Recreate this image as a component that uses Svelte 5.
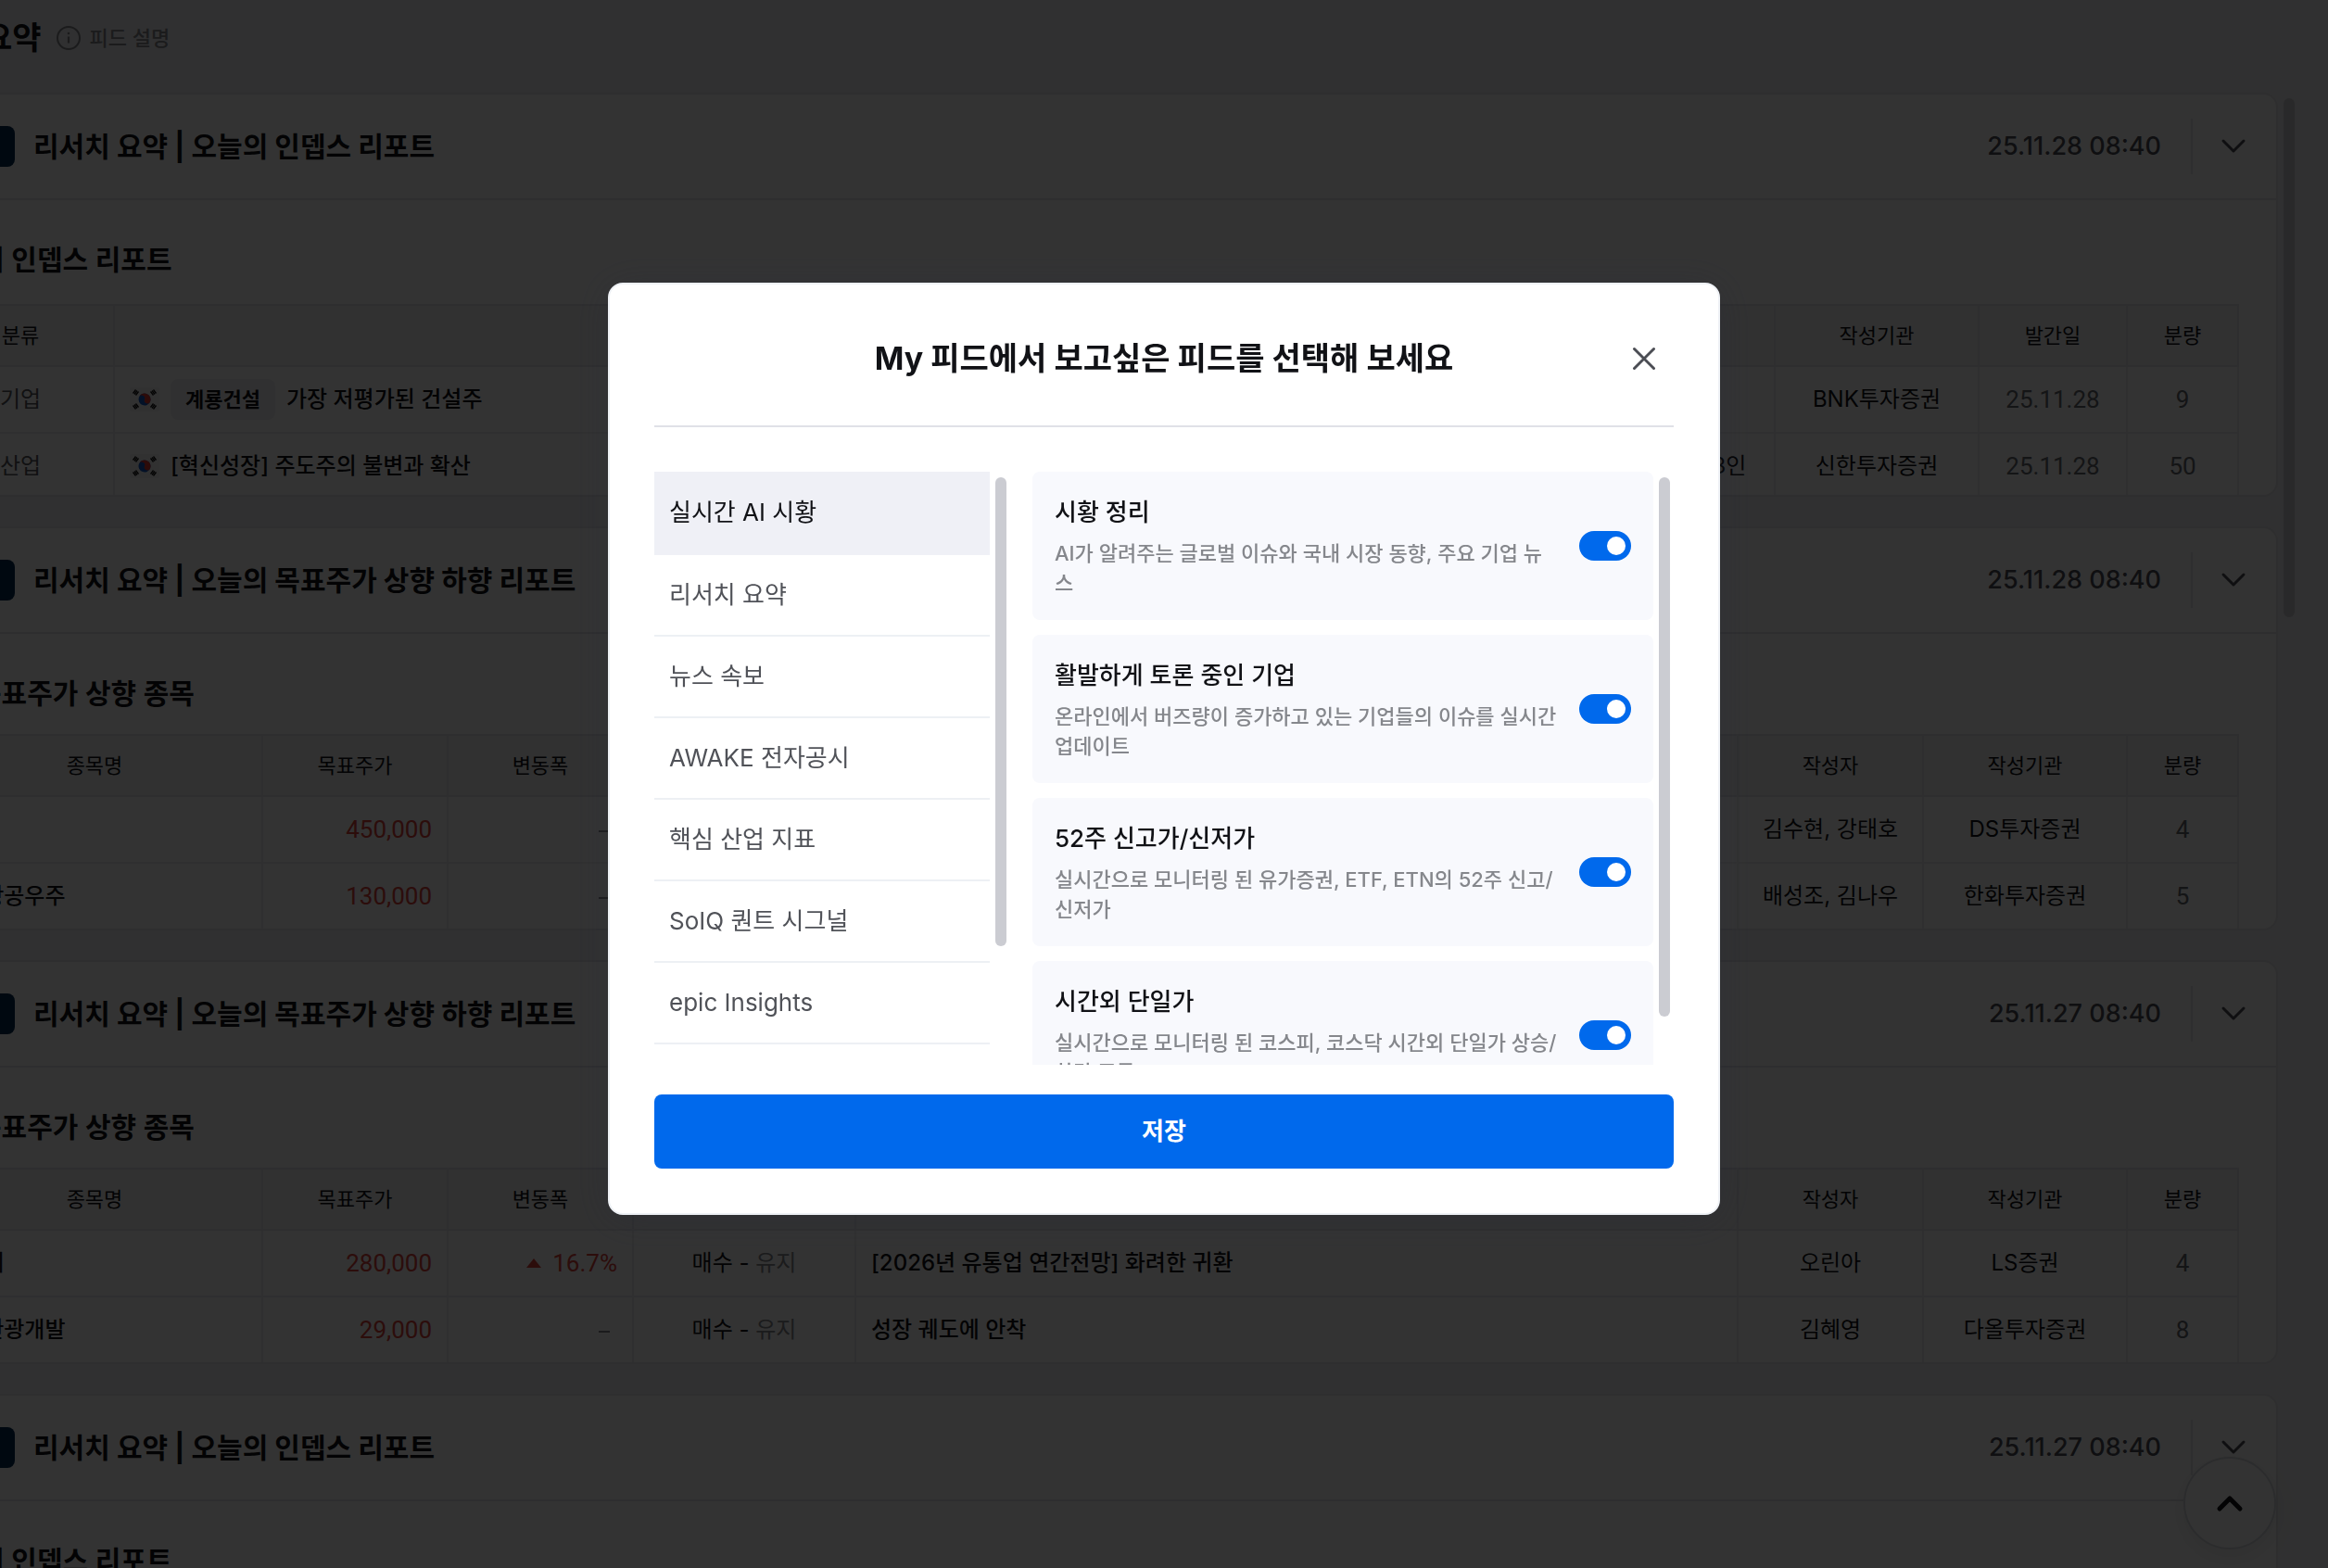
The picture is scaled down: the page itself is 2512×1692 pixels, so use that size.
<script lang="ts">
  interface Row {
    name: string;
    target: string;
    change?: string;
    opinion: string;
    title: string;
    author: string;
    firm: string;
    pages: number;
  }

  interface Feed {
    type: 'indepth' | 'target';
    title: string;
    time: string;
    rows: Row[];
  }

  const indepthRows = [
    { category: '기업', tag: '계룡건설', title: '가장 저평가된 건설주', author: '김선미', firm: 'BNK투자증권', date: '25.11.28', pages: 9 },
    { category: '산업', tag: '', title: '[혁신성장] 주도주의 불변과 확산', author: '심은주 외 3인', firm: '신한투자증권', date: '25.11.28', pages: 50 },
  ];

  const feeds: Feed[] = [
    { type: 'indepth', title: '리서치 요약 | 오늘의 인뎁스 리포트', time: '25.11.28 08:40', rows: [] },
    {
      type: 'target',
      title: '리서치 요약 | 오늘의 목표주가 상향 하향 리포트',
      time: '25.11.28 08:40',
      rows: [
        { name: '효성', target: '450,000', opinion: '매수', title: '', author: '김수현, 강태호', firm: 'DS투자증권', pages: 4 },
        { name: '한국항공우주', target: '130,000', opinion: '매수', title: '', author: '배성조, 김나우', firm: '한화투자증권', pages: 5 },
      ],
    },
    {
      type: 'target',
      title: '리서치 요약 | 오늘의 목표주가 상향 하향 리포트',
      time: '25.11.27 08:40',
      rows: [
        { name: '신세계', target: '280,000', change: '16.7%', opinion: '매수', title: '[2026년 유통업 연간전망] 화려한 귀환', author: '오린아', firm: 'LS증권', pages: 4 },
        { name: '롯데관광개발', target: '29,000', opinion: '매수', title: '성장 궤도에 안착', author: '김혜영', firm: '다올투자증권', pages: 8 },
      ],
    },
    { type: 'indepth', title: '리서치 요약 | 오늘의 인뎁스 리포트', time: '25.11.27 08:40', rows: [] },
  ];

  const categories = [
    '실시간 AI 시황',
    '리서치 요약',
    '뉴스 속보',
    'AWAKE 전자공시',
    '핵심 산업 지표',
    'SoIQ 퀀트 시그널',
    'epic Insights',
  ];

  let selected = $state(0);

  let options = $state([
    { title: '시황 정리', desc: 'AI가 알려주는 글로벌 이슈와 국내 시장 동향, 주요 기업 뉴스', on: true },
    { title: '활발하게 토론 중인 기업', desc: '온라인에서 버즈량이 증가하고 있는 기업들의 이슈를 실시간 업데이트', on: true },
    { title: '52주 신고가/신저가', desc: '실시간으로 모니터링 된 유가증권, ETF, ETN의 52주 신고/신저가', on: true },
    { title: '시간외 단일가', desc: '실시간으로 모니터링 된 코스피, 코스닥 시간외 단일가 상승/하락 종목', on: true },
  ]);
</script>

{#snippet flag()}
  <svg class="flag" viewBox="0 0 32 26" aria-hidden="true">
    <rect width="32" height="26" rx="2" fill="#f4f4f6" />
    <g transform="rotate(20 16 13)">
      <circle cx="16" cy="13" r="6.500" fill="#0f58c4" />
      <path d="M9.500 13a6.500 6.500 0 0 1 13 0a3.250 3.250 0 0 1-6.500 0a3.250 3.250 0 0 0-6.500 0z" fill="#e23a30" />
    </g>
    <g stroke="#111" stroke-width="1.300">
      <path d="M3.500 6.500l3-4M5 7.500l3-4M6.500 8.500l3-4" />
      <path d="M22.500 4.500l3 4M24 3.500l3 4M25.500 2.500l3 4" />
      <path d="M3.500 19.500l3 4M5 18.500l3 4M6.500 17.500l3 4" />
      <path d="M22.500 21.500l3-4M24 22.500l3-4M25.500 23.500l3-4" />
    </g>
  </svg>
{/snippet}

<div class="page">
  <header class="page-header">
    <h1>리서치 요약</h1>
    <button class="info">
      <svg width="28" height="28" viewBox="0 0 28 28" fill="none" stroke="currentColor" stroke-width="2" aria-hidden="true">
        <circle cx="14" cy="14" r="12" />
        <path d="M14 12.500v7" stroke-width="2.200" />
        <circle cx="14" cy="9" r="1.300" fill="currentColor" stroke="none" />
      </svg>
      피드 설명
    </button>
  </header>

  <div class="feed-area">
    <main class="feeds">
      {#each feeds as feed}
        <article class="feed">
          <div class="feed-header">
            <span class="logo"></span>
            <h2>{feed.title}</h2>
            <time>{feed.time}</time>
            <button class="toggle" aria-label="펼치기">
              <svg width="28" height="18" viewBox="0 0 28 18" fill="none" stroke="currentColor" stroke-width="3" stroke-linecap="round" stroke-linejoin="round">
                <path d="M3 3l11 11L25 3" />
              </svg>
            </button>
          </div>

          {#if feed.type === 'indepth'}
            <h3>오늘의 인뎁스 리포트</h3>
            <table class="indepth">
              <colgroup>
                <col class="w-category" /><col /><col class="w-author" /><col class="w-firm" /><col class="w-date" /><col class="w-pages" />
              </colgroup>
              <thead>
                <tr><th>분류</th><th>제목</th><th>작성자</th><th>작성기관</th><th>발간일</th><th>분량</th></tr>
              </thead>
              <tbody>
                {#each indepthRows as row}
                  <tr>
                    <td class="muted">{row.category}</td>
                    <td class="left strong">
                      <div class="report">
                        {@render flag()}
                        {#if row.tag}<span class="tag">{row.tag}</span>{/if}
                        <span>{row.title}</span>
                      </div>
                    </td>
                    <td>{row.author}</td>
                    <td>{row.firm}</td>
                    <td class="num">{row.date}</td>
                    <td class="num">{row.pages}</td>
                  </tr>
                {/each}
              </tbody>
            </table>
          {:else}
            <h3>
              <svg class="heading-icon" viewBox="0 0 44 44" fill="none" stroke="#e0403a" stroke-width="4" aria-hidden="true">
                <path d="M6 32l12-12 8 8 12-16" />
              </svg>
              목표주가 상향 종목
            </h3>
            <table>
              <colgroup>
                <col class="w-name" /><col class="w-price" /><col class="w-price" /><col class="w-opinion" /><col /><col class="w-author" /><col class="w-firm" /><col class="w-pages" />
              </colgroup>
              <thead>
                <tr><th>종목명</th><th>목표주가</th><th>변동폭</th><th>투자의견</th><th>제목</th><th>작성자</th><th>작성기관</th><th>분량</th></tr>
              </thead>
              <tbody>
                {#each feed.rows as row}
                  <tr>
                    <td class="left strong">{row.name}</td>
                    <td class="num right up">{row.target}</td>
                    <td class="num right" class:up={row.change}>
                      {#if row.change}
                        <svg class="arrow" width="16" height="10" viewBox="0 0 16 10" aria-hidden="true"><path d="M8 0l8 10H0z" fill="currentColor" /></svg>{row.change}
                      {:else}
                        <span class="dash"></span>
                      {/if}
                    </td>
                    <td>{row.opinion} - <span class="keep">유지</span></td>
                    <td class="left strong">{row.title}</td>
                    <td>{row.author}</td>
                    <td>{row.firm}</td>
                    <td class="num">{row.pages}</td>
                  </tr>
                {/each}
              </tbody>
            </table>
          {/if}
        </article>
      {/each}
    </main>
    <div class="page-thumb"></div>
  </div>
</div>

<button class="to-top" aria-label="맨 위로">
  <svg width="32" height="20" viewBox="0 0 32 20" fill="none" stroke="currentColor" stroke-width="5" stroke-linecap="round" stroke-linejoin="round">
    <path d="M5 16L16 5l11 11" />
  </svg>
</button>

<div class="overlay">
  <div class="modal" role="dialog" aria-modal="true" aria-labelledby="modal-title">
    <div class="modal-header">
      <h2 id="modal-title">My 피드에서 보고싶은 피드를 선택해 보세요</h2>
      <button class="close" aria-label="닫기">
        <svg width="28" height="28" viewBox="0 0 28 28" fill="none" stroke="currentColor" stroke-width="3" stroke-linecap="round">
          <path d="M3.500 3.500l21 21M24.500 3.500l-21 21" />
        </svg>
      </button>
    </div>

    <div class="modal-body">
      <div class="pane categories">
        <ul>
          {#each categories as category, i}
            <li>
              <button class:active={selected === i} onclick={() => (selected = i)}>{category}</button>
            </li>
          {/each}
        </ul>
        <div class="thumb short"></div>
      </div>

      <div class="pane options">
        <div class="option-list">
          {#each options as option}
            <label class="option">
              <span class="option-text">
                <span class="option-title">{option.title}</span>
                <span class="option-desc">{option.desc}</span>
              </span>
              <input type="checkbox" role="switch" bind:checked={option.on} />
            </label>
          {/each}
        </div>
        <div class="thumb"></div>
      </div>
    </div>

    <button class="save">저장</button>
  </div>
</div>

<style>
  :global(body) {
    overflow: hidden;
    background: #f0f0f2;
    font-family: Inter, "Noto Sans CJK KR", sans-serif;
    line-height: 32px;
    color: #111216;
  }

  h1, h2, h3, ul {
    margin: 0;
    padding: 0;
  }

  button {
    padding: 0;
    border: 0;
    background: none;
    font: inherit;
    color: inherit;
    cursor: pointer;
  }

  svg {
    display: block;
  }

  /* the feed is scrolled sideways under the dialog */
  .page {
    height: 100vh;
    margin-left: -120px;
    padding-right: 36px;
    overflow: hidden;
  }

  .page-header {
    display: flex;
    align-items: center;
    gap: 16px;
    padding: 16px 0;
    margin-bottom: 18px;
  }

  h1 {
    font-size: 34px;
    line-height: 50px;
    font-weight: 700;
  }

  .info {
    display: flex;
    align-items: center;
    gap: 8px;
    font-size: 22px;
    font-weight: 500;
    color: #86888e;
  }

  .feed-area {
    display: flex;
    align-items: flex-start;
    gap: 6px;
  }

  .feeds {
    flex: 1;
    display: flex;
    flex-direction: column;
    gap: 32px;
  }

  .page-thumb {
    width: 12px;
    height: 560px;
    margin-top: 6px;
    border-radius: 6px;
    background: #cbccd2;
  }

  .feed {
    box-sizing: border-box;
    height: 436px;
    overflow: hidden;
    border: 2px solid #e4e4e8;
    border-radius: 16px;
    background: #fff;
  }

  .feed-header {
    display: flex;
    align-items: center;
    height: 112px;
    padding: 0 32px 0 40px;
    border-bottom: 2px solid #e4e4e8;
  }

  .logo {
    width: 94px;
    height: 44px;
    margin-right: 20px;
    border-radius: 8px;
    background: #002850;
  }

  .feed-header h2 {
    flex: 1;
    font-size: 30px;
    font-weight: 700;
  }

  time {
    font-size: 27px;
    font-weight: 500;
    color: #4b4d54;
  }

  .toggle {
    display: flex;
    align-items: center;
    height: 60px;
    margin-left: 32px;
    padding-left: 30px;
    border-left: 2px solid #e4e4e8;
    color: #4b4d54;
  }

  h3 {
    display: flex;
    align-items: center;
    gap: 8px;
    padding: 40px 40px 20px;
    font-size: 30px;
    line-height: 48px;
    font-weight: 600;
  }

  .heading-icon {
    width: 44px;
    height: 44px;
  }

  table {
    width: calc(100% - 80px);
    margin: 0 40px;
    table-layout: fixed;
    border-spacing: 0;
    border-top: 2px solid #e4e4e8;
    font-size: 24px;
  }

  .indepth {
    margin-top: 4px;
  }

  th, td {
    box-sizing: border-box;
    padding: 0 16px;
    border-right: 2px solid #ececef;
    border-bottom: 2px solid #ececef;
    text-align: center;
    white-space: nowrap;
    overflow: hidden;
  }

  th {
    height: 66px;
    border-color: #e4e4e8;
    background: #f2f2f4;
    font-size: 22px;
    font-weight: 400;
  }

  td {
    height: 72px;
  }

  .w-category { width: 202px; }
  .w-name { width: 362px; }
  .w-price, .w-author { width: 200px; }
  .w-opinion { width: 240px; }
  .w-firm { width: 220px; }
  .w-date { width: 160px; }
  .w-pages { width: 120px; }

  .left { text-align: left; }
  .right { text-align: right; }
  .strong { font-weight: 500; }
  .muted { color: #55575d; }
  .keep { color: #86888e; }

  .num {
    font-family: Roboto, sans-serif;
    font-size: 26px;
    color: #66686e;
  }

  .up {
    color: #dc403a;
  }

  .arrow {
    display: inline-block;
    margin-right: 12px;
    vertical-align: 4px;
  }

  .dash {
    display: inline-block;
    width: 12px;
    height: 2px;
    margin-right: 8px;
    vertical-align: middle;
    background: #86888e;
  }

  .report {
    display: flex;
    align-items: center;
    gap: 12px;
  }

  .flag {
    width: 32px;
    height: 26px;
  }

  .tag {
    padding: 0 16px;
    border-radius: 8px;
    background: #f0f0f3;
    font-size: 22px;
    line-height: 44px;
    font-weight: 600;
  }

  .to-top {
    position: fixed;
    right: 56px;
    bottom: 20px;
    display: flex;
    align-items: center;
    justify-content: center;
    width: 100px;
    height: 100px;
    border: 2px solid #d8d9de;
    border-radius: 50%;
    background: #fff;
    box-shadow: 0 8px 24px rgba(0, 0, 0, 0.08);
  }

  .overlay {
    position: fixed;
    inset: 0;
    display: flex;
    align-items: center;
    justify-content: center;
    padding-bottom: 76px;
    background: rgba(0, 0, 0, 0.8);
  }

  .modal {
    box-sizing: border-box;
    width: 1200px;
    max-width: 100%;
    padding: 0 48px 48px;
    border: 2px solid #eef1f5;
    border-radius: 16px;
    background: #fff;
    box-shadow: 0 4px 40px rgba(40, 44, 60, 0.3);
  }

  .modal-header {
    display: grid;
    grid-template-columns: 64px 1fr 64px;
    align-items: center;
    padding: 56px 0 48px;
    border-bottom: 2px solid #e0e1e7;
  }

  .modal-header h2 {
    grid-column: 2;
    font-size: 34px;
    line-height: 48px;
    font-weight: 700;
    text-align: center;
  }

  .close {
    display: flex;
    justify-content: center;
    color: #4b4d54;
  }

  .modal-body {
    display: flex;
    gap: 24px;
    height: 640px;
    margin: 48px 0 32px;
  }

  .pane {
    display: flex;
    gap: 6px;
    padding-right: 4px;
    overflow: hidden;
  }

  .categories {
    width: 380px;
  }

  .options {
    flex: 1;
  }

  .thumb {
    width: 12px;
    height: 91%;
    margin-top: 6px;
    border-radius: 6px;
    background: #cbccd2;
  }

  .thumb.short {
    height: 79%;
  }

  .categories ul {
    flex: 1;
    list-style: none;
  }

  .categories li button {
    box-sizing: border-box;
    width: 100%;
    height: 88px;
    padding: 0 16px;
    border-bottom: 2px solid #edf0f4;
    font-size: 26px;
    text-align: left;
    color: #505258;
  }

  .categories li:first-child button {
    height: 90px;
  }

  .categories li .active {
    border-color: #eff0f6;
    background: #eff0f6;
    color: #111216;
  }

  .option-list {
    flex: 1;
    display: flex;
    flex-direction: column;
    gap: 16px;
  }

  .option {
    display: flex;
    align-items: center;
    gap: 20px;
    padding: 24px;
    border-radius: 8px;
    background: #f8f9fd;
    cursor: pointer;
  }

  .option-text {
    flex: 1;
    display: flex;
    flex-direction: column;
    gap: 8px;
  }

  .option-title {
    font-size: 26px;
    line-height: 40px;
    font-weight: 500;
  }

  .option-desc {
    font-size: 22px;
    font-weight: 500;
    color: #85878c;
    word-break: break-all;
  }

  .option input {
    appearance: none;
    display: flex;
    align-items: center;
    width: 56px;
    height: 32px;
    margin: 0;
    padding: 0 6px;
    border-radius: 16px;
    background: #cbccd2;
    cursor: pointer;
  }

  .option input::before {
    content: '';
    width: 20px;
    height: 20px;
    border-radius: 50%;
    background: #fff;
  }

  .option input:checked {
    justify-content: flex-end;
    background: #0069ec;
  }

  .save {
    width: 100%;
    height: 80px;
    border-radius: 8px;
    background: #0069ec;
    font-size: 26px;
    font-weight: 600;
    color: #fff;
  }
</style>
